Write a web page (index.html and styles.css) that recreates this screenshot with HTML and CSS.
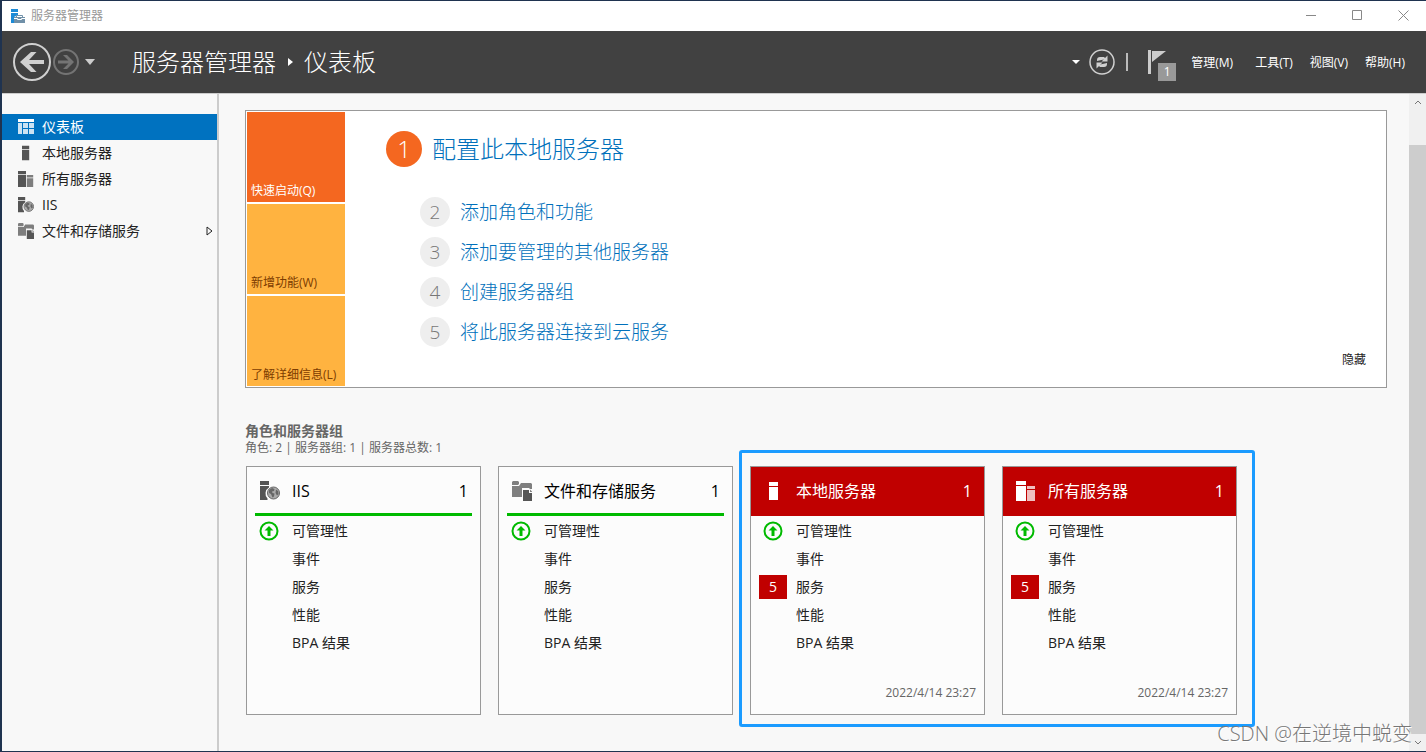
FILE: index.html
```html
<!DOCTYPE html>
<html lang="zh-CN">
<head>
<meta charset="utf-8">
<meta name="viewport" content="width=device-width, initial-scale=1">
<title>服务器管理器</title>
<link rel="stylesheet" href="styles.css">
</head>
<body>
<svg class="symbols" aria-hidden="true">
  <symbol id="server" viewBox="0 0 20 20"><path d="M5 1h9v4H5zM5 6h9v13H5z"/></symbol>
  <symbol id="servers" viewBox="0 0 20 20"><path d="M0 0h10v4H0zM0 5h10v15H0z"/><path class="soft" d="M11 5h8v3h-8zM11 9h8v11h-8z"/></symbol>
  <symbol id="iis" viewBox="0 0 20 20"><path d="M0 0h9v4H0zM0 5h9v1.500A7 7 0 0 0 7.500 17.500V19H0z"/><circle class="globe" cx="13.500" cy="12" r="6"/><path class="land" d="M9 9l3-2 2.500 1-.5 2-2 .5.5 1.500 2 .5-.5 3-1.500 1-1.500-3.500-2-1zM16 8.500l2 1.500.5 3-1.500 1.500-1.500-2.500z"/></symbol>
  <symbol id="storage" viewBox="0 0 20 20"><path class="mid" d="M0 1l1-1h5l1 1v2l-1 1H0zM0 5h7l2-3h10l1 1v5h-2l-1-1h-7v9H0z"/><path d="M11 9h6v3h3v8h-9z"/><path class="soft" d="M18 8.500l2 2V11h-2z"/></symbol>
  <symbol id="up" viewBox="0 0 20 20"><circle cx="10" cy="10" r="8.500" fill="none" stroke="currentColor" stroke-width="2"/><path d="M10 5l4.500 4.500H11.500V15h-3V9.500H5.500z"/></symbol>
</svg>

<div class="window">
  <div class="titlebar">
    <svg class="app-icon" viewBox="0 0 15 15" aria-hidden="true"><path fill="#1c8ad6" d="M1 0h7v3H1zM1 4h7v2L4 8v6H1z"/><path fill="#7090a8" d="M4 8h11v6H4z"/><path fill="none" stroke="#7090a8" d="M6.500 8V6.500h6V8"/><path stroke="#fff" d="M4 9.500h3.500v1h4v-1H15" fill="none"/></svg>
    <span class="app-name">服务器管理器</span>
    <button class="caption" aria-label="最小化"><svg viewBox="0 0 11 11"><path d="M0 5.500h10"/></svg></button>
    <button class="caption" aria-label="最大化"><svg viewBox="0 0 11 11"><path d="M.5.5h9v9H.5z"/></svg></button>
    <button class="caption" aria-label="关闭"><svg viewBox="0 0 11 11"><path d="M.5.5l10 10M10.500.5l-10 10"/></svg></button>
  </div>

  <header class="header">
    <button class="plain" aria-label="后退"><svg class="back" viewBox="0 0 38 38"><circle cx="19" cy="19" r="18"/><path class="fill" d="M7 19L18 9h5.500l-7.500 8h15v4H16l7.500 8H18z"/></svg></button>
    <button class="plain" aria-label="前进"><svg class="forward" viewBox="0 0 26 26"><circle cx="13" cy="13" r="12"/><path class="fill" d="M21 13l-7-7h-4l5.500 5.500H5v3h10.500L10 20h4z"/></svg></button>
    <button class="plain history" aria-label="历史记录"><svg class="caret" viewBox="0 0 10 6"><path d="M0 0h10L5 6z"/></svg></button>
    <h1 class="crumbs">服务器管理器<svg class="crumb-arrow" viewBox="0 0 5 8" aria-hidden="true"><path d="M0 0l5 4-5 4z"/></svg>仪表板</h1>
    <button class="plain" aria-label="选项"><svg class="small-caret" viewBox="0 0 8 4"><path d="M0 0h8L4 4z"/></svg></button>
    <button class="plain refresh-button" aria-label="刷新"><svg class="refresh" viewBox="0 0 26 26"><circle cx="13" cy="13" r="12"/><path class="arc" d="M8 12V11q0-3 3-3h4l2 2M18 14v1q0 3-3 3h-4l-2-2"/><path class="fill" d="M18.500 6.500v6h-6zM7.500 19.500v-6h6z"/></svg></button>
    <span class="divider"></span>
    <button class="plain notices" aria-label="通知"><svg class="flag" viewBox="0 0 18 24"><path d="M0 0h3v24H0zM4 1h14L4 12z"/></svg><span class="notice-count">1</span></button>
    <nav class="menus">
      <button class="plain">管理(M)</button>
      <button class="plain">工具(T)</button>
      <button class="plain">视图(V)</button>
      <button class="plain">帮助(H)</button>
    </nav>
  </header>

  <div class="body">
    <nav class="sidebar">
      <a class="nav-item current" href="#dashboard"><svg class="nav-icon" viewBox="0 0 16 16"><path d="M0 0h16v3H0z"/><path opacity=".8" d="M0 4h4v11H0zM5 4h5v5H5zM11 4h5v5h-5zM5 10h5v5H5zM11 10h5v5h-5z"/></svg>仪表板</a>
      <a class="nav-item" href="#local"><svg class="nav-icon"><use href="#server"/></svg>本地服务器</a>
      <a class="nav-item" href="#all"><svg class="nav-icon"><use href="#servers"/></svg>所有服务器</a>
      <a class="nav-item" href="#iis-role"><svg class="nav-icon"><use href="#iis"/></svg>IIS</a>
      <a class="nav-item" href="#files"><svg class="nav-icon"><use href="#storage"/></svg>文件和存储服务<svg class="expand" viewBox="0 0 7 10"><path d="M1 1v8l5-4z"/></svg></a>
    </nav>

    <main class="main" id="dashboard">
      <section class="welcome">
        <div class="tiles">
          <button class="tile selected">快速启动(Q)</button>
          <button class="tile">新增功能(W)</button>
          <button class="tile">了解详细信息(L)</button>
        </div>
        <div class="steps">
          <a class="step primary" href="#configure"><span class="number">1</span>配置此本地服务器</a>
          <a class="step secondary" href="#add-roles"><span class="number">2</span>添加角色和功能</a>
          <a class="step secondary" href="#add-servers"><span class="number">3</span>添加要管理的其他服务器</a>
          <a class="step secondary" href="#create-group"><span class="number">4</span>创建服务器组</a>
          <a class="step secondary" href="#cloud"><span class="number">5</span>将此服务器连接到云服务</a>
        </div>
        <button class="plain hide">隐藏</button>
      </section>

      <h2 class="group-title">角色和服务器组</h2>
      <p class="group-summary">角色: 2 | 服务器组: 1 | 服务器总数: 1</p>

      <div class="cards">
        <article class="card" id="iis-role">
          <h3 class="card-head"><svg class="card-icon"><use href="#iis"/></svg><span>IIS</span><span class="count">1</span></h3>
          <ul class="rows">
            <li><svg class="ok"><use href="#up"/></svg><span>可管理性</span></li>
            <li><span>事件</span></li>
            <li><span>服务</span></li>
            <li><span>性能</span></li>
            <li><span>BPA 结果</span></li>
          </ul>
        </article>
        <article class="card" id="files">
          <h3 class="card-head"><svg class="card-icon"><use href="#storage"/></svg><span>文件和存储服务</span><span class="count">1</span></h3>
          <ul class="rows">
            <li><svg class="ok"><use href="#up"/></svg><span>可管理性</span></li>
            <li><span>事件</span></li>
            <li><span>服务</span></li>
            <li><span>性能</span></li>
            <li><span>BPA 结果</span></li>
          </ul>
        </article>
        <div class="marked">
          <article class="card alert" id="local">
            <h3 class="card-head"><svg class="card-icon"><use href="#server"/></svg><span>本地服务器</span><span class="count">1</span></h3>
            <ul class="rows">
              <li><svg class="ok"><use href="#up"/></svg><span>可管理性</span></li>
              <li><span>事件</span></li>
              <li><b class="badge">5</b><span>服务</span></li>
              <li><span>性能</span></li>
              <li><span>BPA 结果</span></li>
            </ul>
            <time class="stamp">2022/4/14 23:27</time>
          </article>
          <article class="card alert" id="all">
            <h3 class="card-head"><svg class="card-icon"><use href="#servers"/></svg><span>所有服务器</span><span class="count">1</span></h3>
            <ul class="rows">
              <li><svg class="ok"><use href="#up"/></svg><span>可管理性</span></li>
              <li><span>事件</span></li>
              <li><b class="badge">5</b><span>服务</span></li>
              <li><span>性能</span></li>
              <li><span>BPA 结果</span></li>
            </ul>
            <time class="stamp">2022/4/14 23:27</time>
          </article>
        </div>
      </div>
    </main>

    <div class="scrollbar">
      <button class="scroll-button" aria-label="向上滚动"><svg viewBox="0 0 8 5"><path d="M1 4l3-3 3 3"/></svg></button>
      <div class="thumb"></div>
      <button class="scroll-button" aria-label="向下滚动"><svg viewBox="0 0 8 5"><path d="M1 1l3 3 3-3"/></svg></button>
    </div>
  </div>
  <div class="watermark">CSDN @在逆境中蜕变</div>
</div>
</body>
</html>
```

FILE: styles.css
```css
* { box-sizing: border-box; }

body {
  margin: 0;
  font: 14px/20px "Open Sans", "Noto Sans CJK SC", sans-serif;
  color: #222;
}

button { font: inherit; color: inherit; border: 0; padding: 0; background: none; }
a { color: inherit; text-decoration: none; }
svg { display: block; flex: none; fill: currentColor; }
.symbols { position: absolute; width: 0; height: 0; }

.window {
  position: relative;
  display: flex;
  flex-direction: column;
  min-height: 100vh;
  border: solid #1f3350;
  border-width: 1px 0 1px 2px;
  background: #f8f8f8;
}

/* Title bar */
.titlebar { display: flex; align-items: center; height: 30px; padding-left: 8px; background: #fff; }
.app-icon { width: 15px; height: 15px; }
.app-name { flex: 1; margin-left: 6px; font-size: 12px; color: #999; }
.caption { display: grid; place-items: center; width: 46px; height: 28px; align-self: flex-start; color: #888; }
.caption svg { width: 11px; height: 11px; fill: none; stroke: currentColor; }

/* Header */
.header {
  display: flex;
  align-items: center;
  height: 63px;
  padding: 0 21px 0 11px;
  border-bottom: 1px solid #ccc;
  background: #414141;
  color: #fff;
}
.back { width: 38px; height: 38px; color: #d0d0d0; }
.forward { width: 26px; height: 26px; margin-left: 2px; color: #747474; }
.back circle, .forward circle, .refresh circle { fill: none; stroke: currentColor; stroke-width: 2; }
.history { margin-left: 6px; color: #ccc; }
.caret { width: 10px; height: 6px; }
.crumbs { flex: 1; display: flex; align-items: center; margin: 0 0 0 37px; font-size: 24px; line-height: 32px; font-weight: 300; }
.crumb-arrow { width: 5px; height: 8px; margin: 0 11px 0 12px; }
.small-caret { width: 8px; height: 4px; }
.refresh-button { margin-left: 9px; color: #d0d0d0; }
.refresh { width: 26px; height: 26px; }
.refresh circle { stroke-width: 1.5; }
.divider { width: 2px; height: 18px; margin: 0 20px 0 11px; background: #bbb; }
.notices { position: relative; width: 28px; height: 30px; }
.flag { width: 18px; height: 24px; color: #ccc; }
.notice-count {
  position: absolute;
  right: 0;
  bottom: -4px;
  width: 18px;
  height: 18px;
  background: #999;
  font-size: 12px;
  line-height: 18px;
}
.menus { display: flex; gap: 17px; margin-left: 15px; padding-top: 2px; font-size: 12px; }
.menus :first-child { margin-right: 5px; }

/* Sidebar */
.body { flex: 1; display: flex; }
.sidebar { width: 217px; flex: none; padding-top: 20px; border-right: 2px solid #ccc; }
.nav-item { display: flex; align-items: center; height: 26px; padding: 0 4px 0 16px; }
.nav-item.current { background: #0072c0; color: #fff; }
.nav-icon { width: 16px; height: 16px; margin-right: 8px; color: #555; }
.current .nav-icon { color: #fff; }
.soft, .mid { opacity: .75; }
.globe { fill: #aaa; stroke: #666; stroke-width: 1; }
.land { fill: #666; }
.expand { width: 7px; height: 10px; margin-left: auto; fill: none; stroke: #222; }

/* Dashboard */
.main { flex: 1; min-width: 0; padding: 16px 22px 36px 26px; }
.welcome { display: flex; padding: 1px; border: 1px solid #999; background: #fff; }
.tiles { display: grid; gap: 2px; width: 98px; }
.tile {
  display: flex;
  align-items: flex-end;
  height: 90px;
  padding: 0 4px 1px;
  background: #ffb340;
  color: #7c3c00;
  font-size: 12px;
  white-space: nowrap;
}
.tile.selected { background: #f46720; color: #fff; }
.steps { flex: 1; display: flex; flex-direction: column; align-items: flex-start; gap: 10px; padding: 19px 0 0 41px; }
.step { display: flex; align-items: center; gap: 10px; color: #0070bb; font-size: 19px; line-height: 30px; font-weight: 300; }
.number { width: 30px; height: 30px; border-radius: 50%; background: #eee; color: #777; text-align: center; }
.primary { margin-bottom: 20px; font-size: 24px; line-height: 36px; }
.primary .number { width: 36px; height: 36px; background: #f46720; color: #fff; }
.secondary { margin-left: 34px; }
.hide { align-self: flex-end; margin: 0 19px 16px; font-size: 12px; }

.group-title { margin: 34px 0 0; font-size: 14px; line-height: 18px; font-weight: 700; color: #666; }
.group-summary { margin: 0; font-size: 12px; line-height: 16px; color: #666; }

/* Cards */
.cards { display: flex; flex-wrap: wrap; gap: 17px; margin: 10px 0 0 1px; }
.marked { position: relative; display: flex; gap: 17px; }
.marked::after { content: ""; position: absolute; inset: -16px -18px -12px -11px; border: 3px solid #1a9bff; border-radius: 3px; pointer-events: none; }
.card { display: flex; flex-direction: column; width: 235px; min-height: 249px; border: 1px solid #999; background: #fcfcfc; }
.card-head {
  display: flex;
  align-items: center;
  height: 49px;
  margin: 0 8px;
  padding: 2px 4px 0 5px;
  border-bottom: 3px solid #00ba00;
  color: #000;
  font-size: 16px;
  font-weight: 400;
}
.card-icon { width: 20px; height: 20px; margin-right: 12px; color: #555; }
.count { margin-left: auto; }
.alert .card-head { margin: 0; padding: 0 12px 1px 13px; border: 0; background: #c00000; color: #fff; }
.alert .card-icon { color: #fff; }
.rows { margin: 0; padding: 1px 8px 0; list-style: none; }
.rows li { display: grid; grid-template-columns: 28px 1fr; column-gap: 9px; align-items: center; height: 28px; }
.rows span { grid-column: 2; }
.ok { width: 20px; height: 20px; justify-self: center; color: #00ba00; }
.badge { height: 24px; background: #c00000; color: #fff; font-weight: 400; line-height: 24px; text-align: center; }
.stamp { margin: auto 8px 11px auto; font-size: 12px; color: #666; }

/* Scrollbar */
.scrollbar { display: flex; flex-direction: column; width: 17px; background: #f0f0f0; }
.scroll-button { display: grid; place-items: center; height: 17px; color: #777; }
.scroll-button svg { width: 8px; height: 5px; fill: none; stroke: currentColor; }
.thumb { flex: 1; margin-top: 34px; background: #cdcdcd; }

.watermark { position: absolute; right: 14px; bottom: 3px; font-size: 20px; line-height: 28px; font-weight: 300; color: #777; text-shadow: 1px 1px #fff; }
```
